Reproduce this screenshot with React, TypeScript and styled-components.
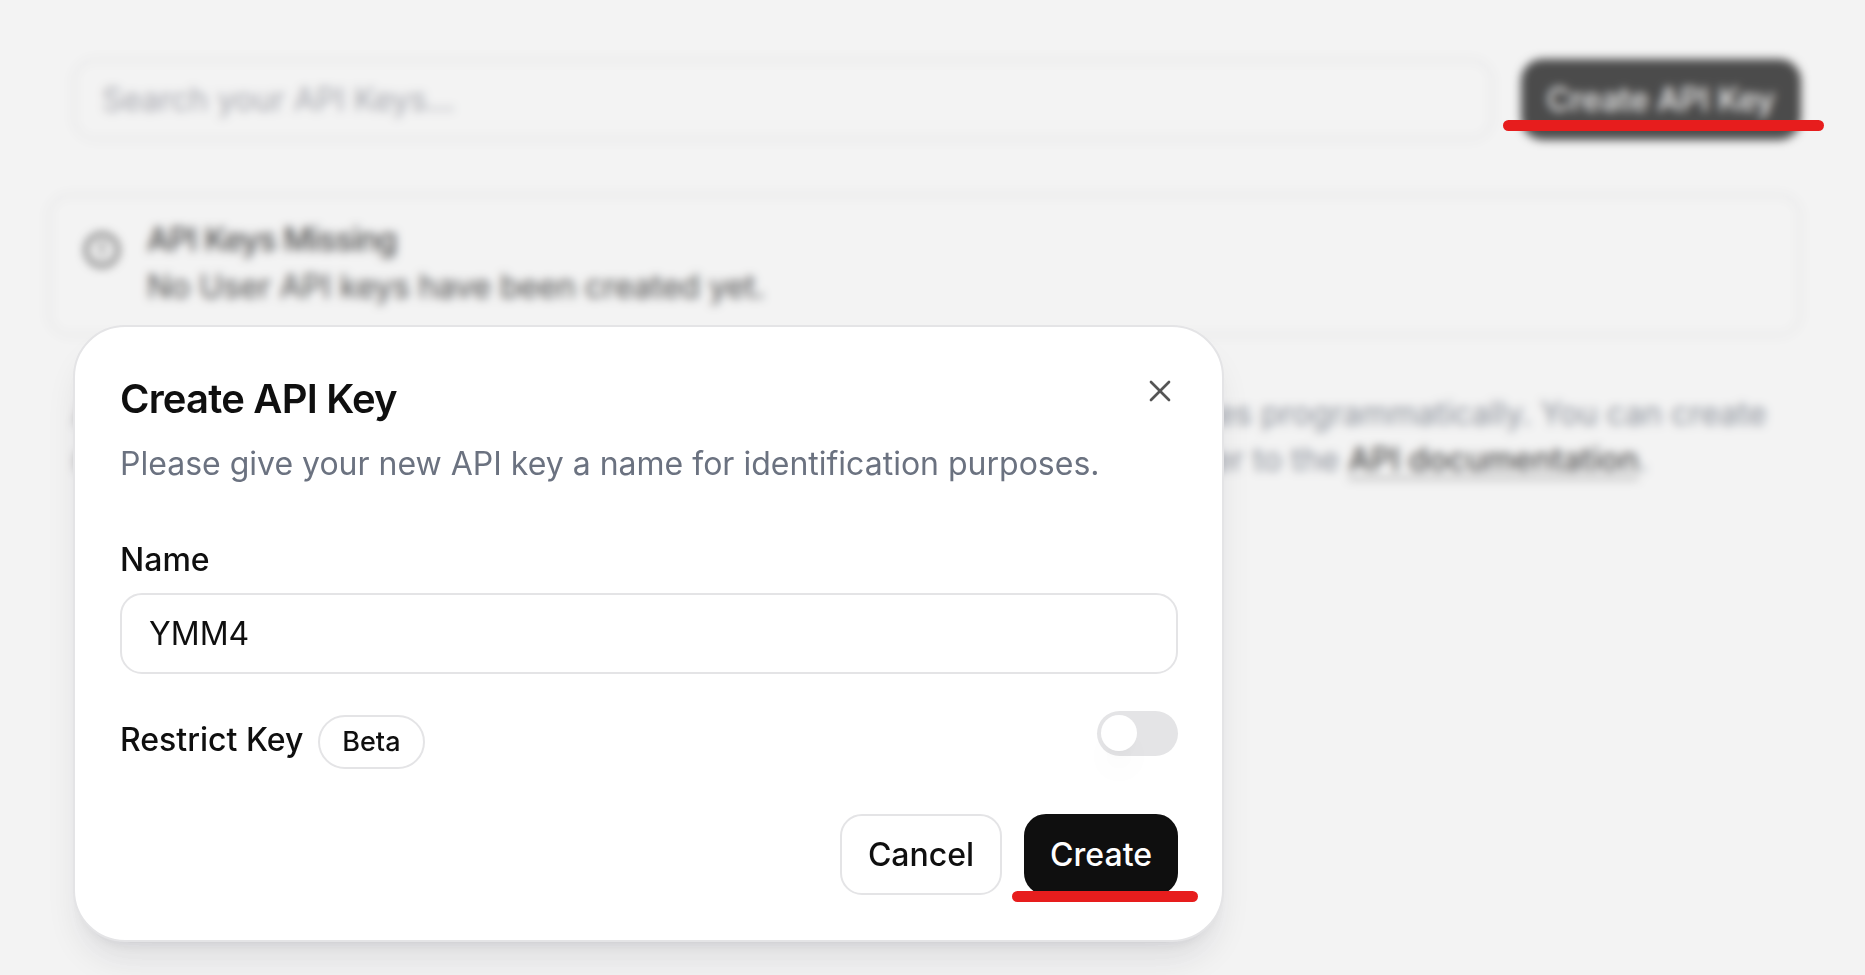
import React, { useState } from "react";
import styled, { createGlobalStyle, css } from "styled-components";
import { CircleAlert, X } from "lucide-react";

const GlobalStyle = createGlobalStyle`
  * { box-sizing: border-box; }
  body {
    margin: 0;
    background: #ffffff;
    color: #0f0f0f;
    font-family: Inter, "Liberation Sans", sans-serif;
    font-size: 32px;
    line-height: 46px;
  }
  button, input { font: inherit; color: inherit; }
`;

const Page = styled.main`
  min-height: 100vh;
  padding: 59px 64px 0 48px;
`;

const Toolbar = styled.div`
  display: flex;
  gap: 28px;
  padding-left: 25px;
`;

const TextInput = styled.input`
  flex: 1;
  min-width: 0;
  width: 100%;
  height: 81px;
  padding: 0 27px;
  border: 2px solid #e4e4e6;
  border-radius: 22px;
  background: transparent;
  outline: none;
  &::placeholder { color: #8f919b; opacity: 1; }
`;

const Marked = styled.div`
  position: relative;
`;

const Underline = styled.span<{ $left: number; $right: number; $bottom: number }>`
  position: absolute;
  z-index: 3;
  left: -${(p) => p.$left}px;
  right: -${(p) => p.$right}px;
  bottom: ${(p) => p.$bottom}px;
  height: 11px;
  border-radius: 6px;
  background: #e71d1d;
  pointer-events: none;
`;

const Button = styled.button<{ $primary?: boolean }>`
  display: block;
  height: 81px;
  padding: 0 26px;
  border: 2px solid #e4e4e6;
  border-radius: 22px;
  background: #ffffff;
  font-weight: 500;
  white-space: nowrap;
  cursor: pointer;
  ${(p) =>
    p.$primary &&
    css`
      padding: 0 24px;
      border-color: #0f0f0f;
      background: #0f0f0f;
      color: #ffffff;
    `}
`;

const Alert = styled.section`
  display: flex;
  align-items: flex-start;
  gap: 26px;
  margin-top: 54px;
  padding: 20px 33px 24px;
  border: 2px solid #e4e4e6;
  border-radius: 22px;
`;

const AlertIcon = styled(CircleAlert)`
  flex: none;
  margin-top: 15px;
  color: #222222;
`;

const AlertTitle = styled.h2`
  margin: 0;
  font-size: 32px;
  font-weight: 500;
  line-height: 48px;
  letter-spacing: -0.025em;
`;

const AlertText = styled.p`
  margin: 0;
`;

const Intro = styled.p`
  margin: 55px 0 0;
  padding: 0 9px 0 25px;
  color: #6b7280;
`;

const DocLink = styled.a`
  color: #0f0f0f;
  font-weight: 500;
  text-decoration: underline;
  text-decoration-color: #a0a0a0;
  text-underline-offset: 6px;
`;

const Overlay = styled.div`
  position: fixed;
  inset: 0;
  z-index: 2;
  padding: 325px 73px 0;
  background: rgba(215, 215, 215, 0.3);
  backdrop-filter: blur(5px);
`;

const Dialog = styled.form`
  position: relative;
  max-width: 1151px;
  padding: 44px 44px 45px 45px;
  border: 2px solid #e4e4e6;
  border-radius: 52px;
  background: #ffffff;
  box-shadow: 0 23px 34px -7px rgba(15, 20, 40, 0.1), 0 9px 14px -9px rgba(15, 20, 40, 0.1);
`;

const Title = styled.h1`
  margin: 0;
  font-size: 40px;
  font-weight: 600;
  line-height: 56px;
  letter-spacing: -0.02em;
`;

const Description = styled.p`
  margin: 14px 0 50px;
  color: #6b7280;
`;

const CloseButton = styled.button`
  position: absolute;
  top: 46px;
  right: 44px;
  display: flex;
  padding: 0;
  border: 0;
  background: none;
  color: #555555;
  cursor: pointer;
`;

const Field = styled.div`
  display: flex;
  flex-direction: column;
  gap: 10px;
  font-weight: 500;
  ${TextInput} { flex: none; font-weight: 400; }
`;

const SwitchRow = styled.div`
  display: flex;
  justify-content: space-between;
  align-items: flex-start;
  margin-top: 37px;
`;

const SwitchLabel = styled.div`
  display: flex;
  align-items: baseline;
  gap: 15px;
  padding-top: 4px;
  font-weight: 500;
`;

const Badge = styled.span`
  padding: 0 22px;
  border: 2px solid #e4e4e6;
  border-radius: 27px;
  font-size: 27px;
  line-height: 50px;
`;

const Switch = styled.input`
  appearance: none;
  width: 81px;
  height: 45px;
  margin: 0;
  padding: 4px;
  border-radius: 23px;
  background: #e4e4e6;
  cursor: pointer;
  &::before {
    content: "";
    display: block;
    width: 36px;
    height: 36px;
    border-radius: 50%;
    background: #ffffff;
    box-shadow: 0 23px 34px -7px rgba(0, 0, 0, 0.05), 0 9px 14px -9px rgba(0, 0, 0, 0.06);
  }
  &:checked { background: #0f0f0f; }
  &:checked::before { margin-left: 37px; }
`;

const Actions = styled.div`
  display: flex;
  justify-content: flex-end;
  gap: 22px;
  margin-top: 45px;
`;

export default function App() {
  const [name, setName] = useState("YMM4");
  const [restricted, setRestricted] = useState(false);

  return (
    <>
      <GlobalStyle />
      <Page>
        <Toolbar>
          <TextInput type="search" aria-label="Search your API Keys" placeholder="Search your API Keys..." />
          <Marked>
            <Button type="button" $primary>Create API Key</Button>
            <Underline $left={18} $right={23} $bottom={9} />
          </Marked>
        </Toolbar>
        <Alert>
          <AlertIcon size={38} strokeWidth={2.2} />
          <div>
            <AlertTitle>API Keys Missing</AlertTitle>
            <AlertText>No User API keys have been created yet.</AlertText>
          </div>
        </Alert>
        <Intro>
          An API Key allows you to connect to our API and to also use all of our services programmatically. You can
          create many keys with different access rights for your account. For info, please refer to the{" "}
          <DocLink href="#docs">API documentation</DocLink>.
        </Intro>
      </Page>
      <Overlay>
        <Dialog role="dialog" aria-labelledby="dialog-title" onSubmit={(e) => e.preventDefault()}>
          <Title id="dialog-title">Create API Key</Title>
          <Description>Please give your new API key a name for identification purposes.</Description>
          <CloseButton type="button" aria-label="Close">
            <X size={36} strokeWidth={1.8} />
          </CloseButton>
          <Field>
            <label htmlFor="key-name">Name</label>
            <TextInput id="key-name" value={name} onChange={(e) => setName(e.target.value)} />
          </Field>
          <SwitchRow>
            <SwitchLabel>
              <label htmlFor="restrict">Restrict Key</label>
              <Badge>Beta</Badge>
            </SwitchLabel>
            <Switch
              id="restrict"
              type="checkbox"
              role="switch"
              checked={restricted}
              onChange={(e) => setRestricted(e.target.checked)}
            />
          </SwitchRow>
          <Actions>
            <Button type="button">Cancel</Button>
            <Marked>
              <Button type="submit" $primary>Create</Button>
              <Underline $left={12} $right={20} $bottom={-7} />
            </Marked>
          </Actions>
        </Dialog>
      </Overlay>
    </>
  );
}
